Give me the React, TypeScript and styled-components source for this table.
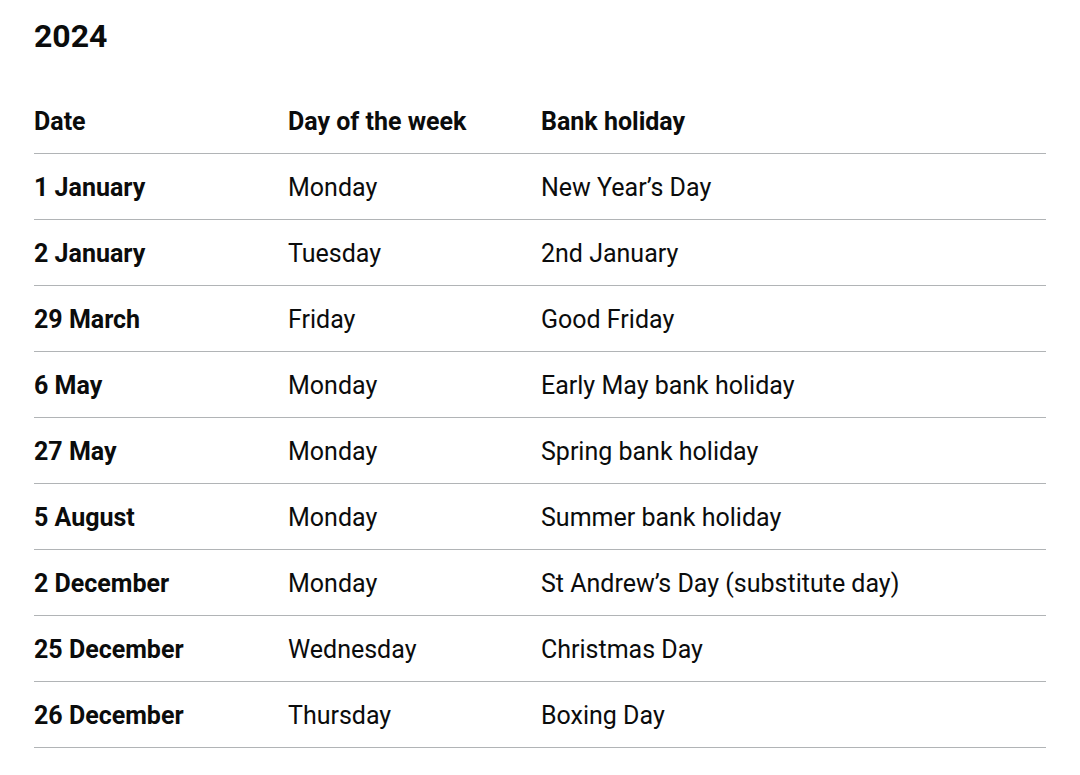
import styled, { createGlobalStyle } from "styled-components";

const GlobalStyle = createGlobalStyle`
  body {
    margin: 0;
    background: #ffffff;
    color: #0b0c0c;
    font-family: Roboto, "Liberation Sans", Arial, sans-serif;
  }
`;

const Page = styled.main`
  padding: 16px 34px 0 34px;
`;

const YearHeading = styled.h2`
  margin: 0 0 32px 0;
  font-size: 32px;
  line-height: 40px;
  font-weight: 700;
`;

const Table = styled.table`
  width: 1012px;
  border-collapse: collapse;
  border-spacing: 0;
  table-layout: fixed;
`;

const Col = styled.col<{ $width?: number }>`
  width: ${(p) => (p.$width ? `${p.$width}px` : "auto")};
`;

const Cell = styled.td<{ $bold?: boolean }>`
  padding: 16px 20px 14px 0;
  border-bottom: 1px solid #b1b4b6;
  font-size: 25px;
  line-height: 35px;
  font-weight: ${(p) => (p.$bold ? 700 : 400)};
  text-align: left;
  vertical-align: top;
  white-space: nowrap;
`;

const HeadCell = styled(Cell).attrs({ as: "th" })`
  font-weight: 700;
`;

const holidays = [
  { date: "1 January", day: "Monday", name: "New Year’s Day" },
  { date: "2 January", day: "Tuesday", name: "2nd January" },
  { date: "29 March", day: "Friday", name: "Good Friday" },
  { date: "6 May", day: "Monday", name: "Early May bank holiday" },
  { date: "27 May", day: "Monday", name: "Spring bank holiday" },
  { date: "5 August", day: "Monday", name: "Summer bank holiday" },
  { date: "2 December", day: "Monday", name: "St Andrew’s Day (substitute day)" },
  { date: "25 December", day: "Wednesday", name: "Christmas Day" },
  { date: "26 December", day: "Thursday", name: "Boxing Day" },
];

export default function App() {
  return (
    <Page>
      <GlobalStyle />
      <YearHeading>2024</YearHeading>
      <Table>
        <colgroup>
          <Col $width={254} />
          <Col $width={253} />
          <Col />
        </colgroup>
        <thead>
          <tr>
            <HeadCell scope="col">Date</HeadCell>
            <HeadCell scope="col">Day of the week</HeadCell>
            <HeadCell scope="col">Bank holiday</HeadCell>
          </tr>
        </thead>
        <tbody>
          {holidays.map((h) => (
            <tr key={h.date}>
              <Cell $bold as="th" scope="row">
                {h.date}
              </Cell>
              <Cell>{h.day}</Cell>
              <Cell>{h.name}</Cell>
            </tr>
          ))}
        </tbody>
      </Table>
    </Page>
  );
}
